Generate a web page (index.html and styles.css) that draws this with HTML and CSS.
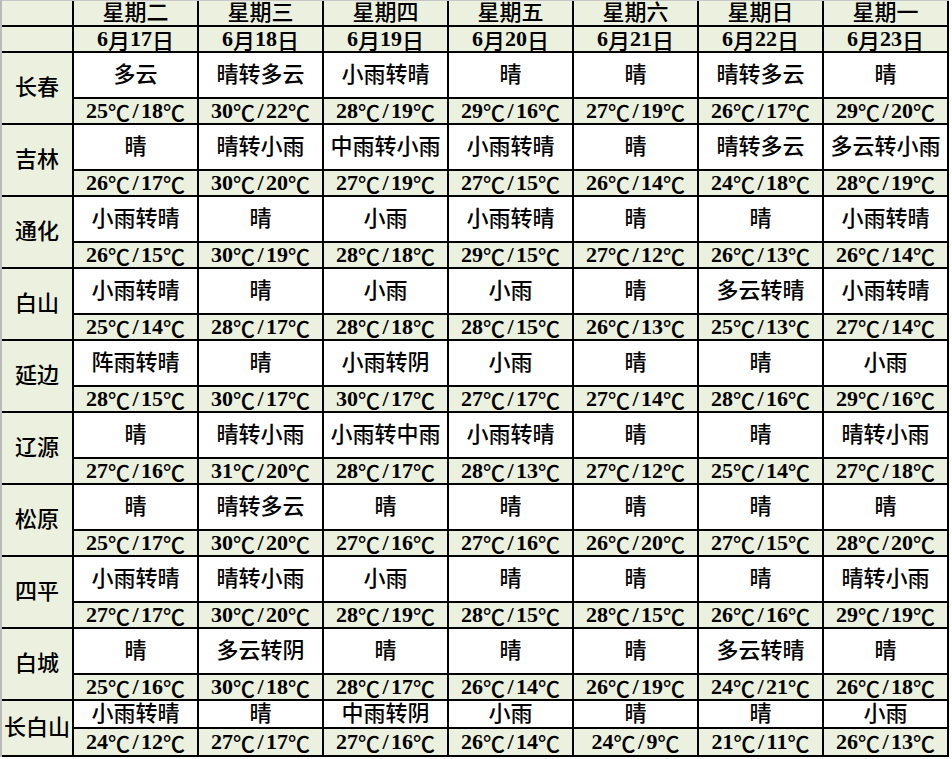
FILE: index.html
```html
<!DOCTYPE html>
<html lang="zh-CN">
<head>
<meta charset="utf-8">
<title>吉林省一周天气预报</title>
<link rel="stylesheet" href="styles.css">
</head>
<body>
<div class="sheet">
  <div class="c"></div>
  <div class="c">星期二</div><div class="c">星期三</div><div class="c">星期四</div><div class="c">星期五</div><div class="c">星期六</div><div class="c">星期日</div><div class="c">星期一</div>
  <div class="c"></div>
  <div class="c n">6<span class="k">月</span>17<span class="k">日</span></div><div class="c n">6<span class="k">月</span>18<span class="k">日</span></div><div class="c n">6<span class="k">月</span>19<span class="k">日</span></div><div class="c n">6<span class="k">月</span>20<span class="k">日</span></div><div class="c n">6<span class="k">月</span>21<span class="k">日</span></div><div class="c n">6<span class="k">月</span>22<span class="k">日</span></div><div class="c n">6<span class="k">月</span>23<span class="k">日</span></div>

  <div class="c city">长春</div>
  <div class="c w">多云</div><div class="c w">晴转多云</div><div class="c w">小雨转晴</div><div class="c w">晴</div><div class="c w">晴</div><div class="c w">晴转多云</div><div class="c w">晴</div>
  <div class="c n">25<span class="k">℃</span><span class="sl">/</span>18<span class="k">℃</span></div><div class="c n">30<span class="k">℃</span><span class="sl">/</span>22<span class="k">℃</span></div><div class="c n">28<span class="k">℃</span><span class="sl">/</span>19<span class="k">℃</span></div><div class="c n">29<span class="k">℃</span><span class="sl">/</span>16<span class="k">℃</span></div><div class="c n">27<span class="k">℃</span><span class="sl">/</span>19<span class="k">℃</span></div><div class="c n">26<span class="k">℃</span><span class="sl">/</span>17<span class="k">℃</span></div><div class="c n">29<span class="k">℃</span><span class="sl">/</span>20<span class="k">℃</span></div>

  <div class="c city">吉林</div>
  <div class="c w">晴</div><div class="c w">晴转小雨</div><div class="c w">中雨转小雨</div><div class="c w">小雨转晴</div><div class="c w">晴</div><div class="c w">晴转多云</div><div class="c w">多云转小雨</div>
  <div class="c n">26<span class="k">℃</span><span class="sl">/</span>17<span class="k">℃</span></div><div class="c n">30<span class="k">℃</span><span class="sl">/</span>20<span class="k">℃</span></div><div class="c n">27<span class="k">℃</span><span class="sl">/</span>19<span class="k">℃</span></div><div class="c n">27<span class="k">℃</span><span class="sl">/</span>15<span class="k">℃</span></div><div class="c n">26<span class="k">℃</span><span class="sl">/</span>14<span class="k">℃</span></div><div class="c n">24<span class="k">℃</span><span class="sl">/</span>18<span class="k">℃</span></div><div class="c n">28<span class="k">℃</span><span class="sl">/</span>19<span class="k">℃</span></div>

  <div class="c city">通化</div>
  <div class="c w">小雨转晴</div><div class="c w">晴</div><div class="c w">小雨</div><div class="c w">小雨转晴</div><div class="c w">晴</div><div class="c w">晴</div><div class="c w">小雨转晴</div>
  <div class="c n">26<span class="k">℃</span><span class="sl">/</span>15<span class="k">℃</span></div><div class="c n">30<span class="k">℃</span><span class="sl">/</span>19<span class="k">℃</span></div><div class="c n">28<span class="k">℃</span><span class="sl">/</span>18<span class="k">℃</span></div><div class="c n">29<span class="k">℃</span><span class="sl">/</span>15<span class="k">℃</span></div><div class="c n">27<span class="k">℃</span><span class="sl">/</span>12<span class="k">℃</span></div><div class="c n">26<span class="k">℃</span><span class="sl">/</span>13<span class="k">℃</span></div><div class="c n">26<span class="k">℃</span><span class="sl">/</span>14<span class="k">℃</span></div>

  <div class="c city">白山</div>
  <div class="c w">小雨转晴</div><div class="c w">晴</div><div class="c w">小雨</div><div class="c w">小雨</div><div class="c w">晴</div><div class="c w">多云转晴</div><div class="c w">小雨转晴</div>
  <div class="c n">25<span class="k">℃</span><span class="sl">/</span>14<span class="k">℃</span></div><div class="c n">28<span class="k">℃</span><span class="sl">/</span>17<span class="k">℃</span></div><div class="c n">28<span class="k">℃</span><span class="sl">/</span>18<span class="k">℃</span></div><div class="c n">28<span class="k">℃</span><span class="sl">/</span>15<span class="k">℃</span></div><div class="c n">26<span class="k">℃</span><span class="sl">/</span>13<span class="k">℃</span></div><div class="c n">25<span class="k">℃</span><span class="sl">/</span>13<span class="k">℃</span></div><div class="c n">27<span class="k">℃</span><span class="sl">/</span>14<span class="k">℃</span></div>

  <div class="c city">延边</div>
  <div class="c w">阵雨转晴</div><div class="c w">晴</div><div class="c w">小雨转阴</div><div class="c w">小雨</div><div class="c w">晴</div><div class="c w">晴</div><div class="c w">小雨</div>
  <div class="c n">28<span class="k">℃</span><span class="sl">/</span>15<span class="k">℃</span></div><div class="c n">30<span class="k">℃</span><span class="sl">/</span>17<span class="k">℃</span></div><div class="c n">30<span class="k">℃</span><span class="sl">/</span>17<span class="k">℃</span></div><div class="c n">27<span class="k">℃</span><span class="sl">/</span>17<span class="k">℃</span></div><div class="c n">27<span class="k">℃</span><span class="sl">/</span>14<span class="k">℃</span></div><div class="c n">28<span class="k">℃</span><span class="sl">/</span>16<span class="k">℃</span></div><div class="c n">29<span class="k">℃</span><span class="sl">/</span>16<span class="k">℃</span></div>

  <div class="c city">辽源</div>
  <div class="c w">晴</div><div class="c w">晴转小雨</div><div class="c w">小雨转中雨</div><div class="c w">小雨转晴</div><div class="c w">晴</div><div class="c w">晴</div><div class="c w">晴转小雨</div>
  <div class="c n">27<span class="k">℃</span><span class="sl">/</span>16<span class="k">℃</span></div><div class="c n">31<span class="k">℃</span><span class="sl">/</span>20<span class="k">℃</span></div><div class="c n">28<span class="k">℃</span><span class="sl">/</span>17<span class="k">℃</span></div><div class="c n">28<span class="k">℃</span><span class="sl">/</span>13<span class="k">℃</span></div><div class="c n">27<span class="k">℃</span><span class="sl">/</span>12<span class="k">℃</span></div><div class="c n">25<span class="k">℃</span><span class="sl">/</span>14<span class="k">℃</span></div><div class="c n">27<span class="k">℃</span><span class="sl">/</span>18<span class="k">℃</span></div>

  <div class="c city">松原</div>
  <div class="c w">晴</div><div class="c w">晴转多云</div><div class="c w">晴</div><div class="c w">晴</div><div class="c w">晴</div><div class="c w">晴</div><div class="c w">晴</div>
  <div class="c n">25<span class="k">℃</span><span class="sl">/</span>17<span class="k">℃</span></div><div class="c n">30<span class="k">℃</span><span class="sl">/</span>20<span class="k">℃</span></div><div class="c n">27<span class="k">℃</span><span class="sl">/</span>16<span class="k">℃</span></div><div class="c n">27<span class="k">℃</span><span class="sl">/</span>16<span class="k">℃</span></div><div class="c n">26<span class="k">℃</span><span class="sl">/</span>20<span class="k">℃</span></div><div class="c n">27<span class="k">℃</span><span class="sl">/</span>15<span class="k">℃</span></div><div class="c n">28<span class="k">℃</span><span class="sl">/</span>20<span class="k">℃</span></div>

  <div class="c city">四平</div>
  <div class="c w">小雨转晴</div><div class="c w">晴转小雨</div><div class="c w">小雨</div><div class="c w">晴</div><div class="c w">晴</div><div class="c w">晴</div><div class="c w">晴转小雨</div>
  <div class="c n">27<span class="k">℃</span><span class="sl">/</span>17<span class="k">℃</span></div><div class="c n">30<span class="k">℃</span><span class="sl">/</span>20<span class="k">℃</span></div><div class="c n">28<span class="k">℃</span><span class="sl">/</span>19<span class="k">℃</span></div><div class="c n">28<span class="k">℃</span><span class="sl">/</span>15<span class="k">℃</span></div><div class="c n">28<span class="k">℃</span><span class="sl">/</span>15<span class="k">℃</span></div><div class="c n">26<span class="k">℃</span><span class="sl">/</span>16<span class="k">℃</span></div><div class="c n">29<span class="k">℃</span><span class="sl">/</span>19<span class="k">℃</span></div>

  <div class="c city">白城</div>
  <div class="c w">晴</div><div class="c w">多云转阴</div><div class="c w">晴</div><div class="c w">晴</div><div class="c w">晴</div><div class="c w">多云转晴</div><div class="c w">晴</div>
  <div class="c n">25<span class="k">℃</span><span class="sl">/</span>16<span class="k">℃</span></div><div class="c n">30<span class="k">℃</span><span class="sl">/</span>18<span class="k">℃</span></div><div class="c n">28<span class="k">℃</span><span class="sl">/</span>17<span class="k">℃</span></div><div class="c n">26<span class="k">℃</span><span class="sl">/</span>14<span class="k">℃</span></div><div class="c n">26<span class="k">℃</span><span class="sl">/</span>19<span class="k">℃</span></div><div class="c n">24<span class="k">℃</span><span class="sl">/</span>21<span class="k">℃</span></div><div class="c n">26<span class="k">℃</span><span class="sl">/</span>18<span class="k">℃</span></div>

  <div class="c city">长白山</div>
  <div class="c w">小雨转晴</div><div class="c w">晴</div><div class="c w">中雨转阴</div><div class="c w">小雨</div><div class="c w">晴</div><div class="c w">晴</div><div class="c w">小雨</div>
  <div class="c n">24<span class="k">℃</span><span class="sl">/</span>12<span class="k">℃</span></div><div class="c n">27<span class="k">℃</span><span class="sl">/</span>17<span class="k">℃</span></div><div class="c n">27<span class="k">℃</span><span class="sl">/</span>16<span class="k">℃</span></div><div class="c n">26<span class="k">℃</span><span class="sl">/</span>14<span class="k">℃</span></div><div class="c n">24<span class="k">℃</span><span class="sl">/</span>9<span class="k">℃</span></div><div class="c n">21<span class="k">℃</span><span class="sl">/</span>11<span class="k">℃</span></div><div class="c n">26<span class="k">℃</span><span class="sl">/</span>13<span class="k">℃</span></div>
</div>
</body>
</html>
```
FILE: styles.css
```css
html, body {
  margin: 0;
  background: #ffffff;
}

.sheet {
  display: grid;
  width: max-content;
  grid-template-columns: 70px repeat(7, 123px);
  grid-template-rows: 24px 24px repeat(9, 44px 24px) 26px 26px;
  gap: 2px;
  padding: 0 2px 2px 0;
  background: #000000;
  border-top: 1px solid #c6c6c6;
  border-left: 2px solid #b9b9b9;
  font-family: "Liberation Serif", "Noto Sans CJK SC", serif;
  font-weight: 500;
  font-size: 22px;
  line-height: 1;
  color: #000000;
}

.c {
  display: flex;
  align-items: center;
  justify-content: center;
  background: #ebf1de;
  white-space: nowrap;
}

.w {
  background: #ffffff;
}

.city {
  grid-row: span 2;
}

.n {
  font-weight: 700;
}

.k {
  font-family: "Noto Sans CJK SC", sans-serif;
  font-weight: 500;
}

.sl {
  display: inline-block;
  width: 0.5em;
  text-align: center;
}
```
